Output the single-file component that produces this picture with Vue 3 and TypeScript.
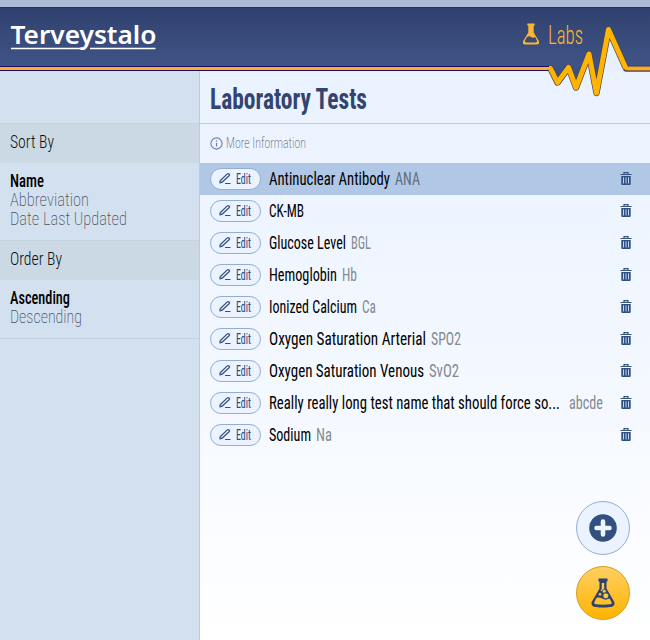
<script setup lang="ts">
import { h, type FunctionalComponent } from 'vue'

interface FitProps { text: string; w: number; box: number; base: number }

// Single line of condensed text, fitted to a given advance width.
const Fit: FunctionalComponent<FitProps> = (p) =>
  h('svg', { width: p.w, height: p.box, class: 'fit' }, [
    h('text', { x: 0, y: p.base, textLength: p.w, lengthAdjust: 'spacingAndGlyphs' }, p.text),
  ])
Fit.props = ['text', 'w', 'box', 'base']

const tests = [
  { name: 'Antinuclear Antibody', w: 121, abbr: 'ANA', aw: 25 },
  { name: 'CK-MB', w: 35, abbr: '', aw: 0 },
  { name: 'Glucose Level', w: 77, abbr: 'BGL', aw: 20 },
  { name: 'Hemoglobin', w: 68, abbr: 'Hb', aw: 15 },
  { name: 'Ionized Calcium', w: 88, abbr: 'Ca', aw: 14 },
  { name: 'Oxygen Saturation Arterial', w: 157, abbr: 'SPO2', aw: 30 },
  { name: 'Oxygen Saturation Venous', w: 155, abbr: 'SvO2', aw: 30 },
  { name: 'Really really long test name that should force so...', w: 291, abbr: 'abcde', aw: 34, long: true },
  { name: 'Sodium', w: 42, abbr: 'Na', aw: 16 },
]

const groups = [
  { title: 'Sort By', w: 44, options: [
    { text: 'Name', w: 34, on: true },
    { text: 'Abbreviation', w: 79, on: false },
    { text: 'Date Last Updated', w: 117, on: false },
  ] },
  { title: 'Order By', w: 52, options: [
    { text: 'Ascending', w: 60, on: true },
    { text: 'Descending', w: 72, on: false },
  ] },
]
</script>

<template>
  <div class="app">
    <header class="header">
      <svg class="brand" width="160" height="40" viewBox="0 0 160 40">
        <text x="10.500" y="27.500" textLength="146" lengthAdjust="spacingAndGlyphs">Terveystalo</text>
        <path d="M11 32.500H80.500M90 32.500H155.500" stroke="#fff" stroke-width="1.300" />
      </svg>
      <div class="labs">
        <svg width="18" height="23" viewBox="0 0 18 23">
          <path d="M5.300.5H12.700V2.500H11.700V9.500L16.800 18Q18 21.500 14.700 21.500H3.300Q0 21.500 1.200 18L6.300 9.500V2.500H5.300Z" fill="#fdb432" />
          <path d="M5 14Q7 12.500 9 14T13.200 14L15 17.800Q15.500 19.400 13.700 19.500H4.300Q2.500 19.400 3 17.800Z" fill="#374a78" />
        </svg>
        <Fit class="labs-text" text="Labs" :w="35" :box="30" :base="24" />
      </div>
    </header>

    <div class="body">
      <aside class="side">
        <div class="side-top" />
        <section v-for="g in groups" :key="g.title" class="group">
          <h2><Fit :text="g.title" :w="g.w" :box="39" :base="24" /></h2>
          <ul>
            <li v-for="o in g.options" :key="o.text" :class="{ on: o.on }">
              <Fit :text="o.text" :w="o.w" :box="19" :base="16" />
            </li>
          </ul>
        </section>
      </aside>

      <main class="main">
        <h1><Fit text="Laboratory Tests" :w="157" :box="52" :base="38" /></h1>
        <div class="info">
          <svg width="13" height="13" viewBox="0 0 13 13" fill="none" stroke="#6d82aa" stroke-width="1.100">
            <circle cx="6.500" cy="6.500" r="5.600" />
            <path d="M6.500 5.700V9.600M6.500 3.200V4.500" />
          </svg>
          <Fit text="More Information" :w="80" :box="39" :base="24" />
        </div>
        <div v-for="(t, i) in tests" :key="t.name" class="row" :class="{ active: i === 0 }">
          <button class="edit">
            <svg width="12" height="12" viewBox="0 0 12 12" fill="none" stroke="#32507f" stroke-width="1.200" stroke-linejoin="round">
              <path d="M1.200 7.700L8.300.900Q9.300.300 10.100 1T10.100 2.700L3.100 9.200L.9 9.800ZM6 10.500H11.500" />
            </svg>
            <Fit text="Edit" :w="15" :box="20" :base="15" />
          </button>
          <Fit class="name" :text="t.name" :w="t.w" :box="32" :base="22" />
          <Fit v-if="t.abbr" class="abbr" :class="{ far: t.long }" :text="t.abbr" :w="t.aw" :box="32" :base="22" />
          <svg class="trash" width="12" height="13" viewBox="0 0 12 13">
            <path d="M4 1.900V.6H8V1.900M.5 2.500H11.500" fill="none" stroke="#34537f" stroke-width="1.200" />
            <path d="M1.300 4H10.700V12Q10.700 13 9.700 13H2.300Q1.300 13 1.300 12Z" fill="#2f5085" />
            <path d="M3.500 5.300V11.500M6 5.300V11.500M8.500 5.300V11.500" stroke="#c4d3e8" stroke-width="1" />
          </svg>
        </div>
      </main>
    </div>

    <svg class="pulse" width="110" height="80" viewBox="540 20 110 80">
      <path d="M549 66L557.500 83L568.500 66ZM568.500 66L576 88L584 66ZM591.500 66L596.500 93L601.500 66Z" fill="#3e5183" />
      <path d="M583 71L589 54L592.500 71ZM600.800 71L608.500 29L627 71Z" fill="#e8f0fd" />
      <g fill="none" stroke-linejoin="round">
        <path d="M549 68.500H550.500L557.500 82.500L568.500 67.500L576 87.500L589 54L596.500 93L608.500 29.500L626 68.500H651" stroke="#4d4350" stroke-width="6.400" />
        <path d="M549 68.500H550.500L557.500 82.500L568.500 67.500L576 87.500L589 54L596.500 93L608.500 29.500L626 68.500" stroke="#ffb400" stroke-width="5" />
        <path d="M628 68.500H651" stroke="#76575f" stroke-width="5" />
        <path d="M625 68.500H651" stroke="#ffb00f" stroke-width="3.400" />
      </g>
    </svg>

    <div class="fabs">
      <button class="fab add">
        <svg width="28" height="28" viewBox="0 0 28 28">
          <circle cx="14" cy="14" r="13.800" fill="#32507f" />
          <path d="M14 7.500V20.500M7.500 14H20.500" stroke="#edf4ff" stroke-width="4.600" stroke-linecap="round" />
        </svg>
      </button>
      <button class="fab lab">
        <svg width="24" height="30" viewBox="0 0 24 30">
          <path d="M7.500 .5H16.500V3.500H15.500V10.500L23.300 24Q24.500 28.300 19 29Q12 30 5 29Q-.5 28.300 .7 24L8.500 10.500V3.500H7.500Z" fill="#2d426f" />
          <path d="M5.500 19.800Q8.500 19 11.500 20.800T18.500 20.500L20.800 24.500Q21 26 19 26.300Q12 27.200 5 26.300Q3 26 3.200 24.500Z" fill="#ffc12f" />
          <path d="M10.800 5H13.200V10.800L14.500 13H9.500L10.800 10.800Z" fill="#ffcb53" />
          <g fill="#ffca4b" stroke="#2d426f" stroke-width=".8">
            <circle cx="9" cy="16.300" r="1.700" />
            <circle cx="13.200" cy="13.200" r="2" />
            <circle cx="14.800" cy="17.800" r="2.900" />
          </g>
        </svg>
      </button>
    </div>
  </div>
</template>

<style>
body { margin: 0; overflow: hidden; }
</style>

<style scoped>
.app {
  position: relative;
  display: flex;
  flex-direction: column;
  width: 650px;
  height: 640px;
  overflow: hidden;
  box-sizing: border-box;
  border-top: 7px solid #acbbd5;
  font-family: Roboto, "Liberation Sans", sans-serif;
  font-stretch: 75%;
}
.app *, .app svg { box-sizing: border-box; }
.fit { display: block; flex: none; overflow: visible; fill: currentColor; }
h1, h2, ul { margin: 0; padding: 0; list-style: none; }
button { padding: 0; font-family: inherit; font-stretch: inherit; }

.header {
  display: flex;
  justify-content: space-between;
  flex: none;
  height: 59px;
  padding: 8px 67px 0 0;
  border-top: 1px solid #243258;
  background: linear-gradient(#30416e, #3f5486);
}
.brand { overflow: visible; fill: #fff; font: 600 25px "Noto Sans", "Open Sans", sans-serif; font-stretch: 100%; }
.labs { display: flex; gap: 8px; padding-top: 7px; }
.labs-text { margin-top: -3px; font-size: 25px; font-weight: 350; color: #fdb432; }

.body {
  display: flex;
  flex: 1;
  margin-top: 5px;
  position: relative;
}
.body::before {
  content: "";
  position: absolute;
  top: -5px;
  left: 0;
  right: 0;
  height: 3px;
  border: solid #1c0b62;
  border-width: 1px 0;
  background: #ffae27;
}
.side {
  width: 200px;
  flex: none;
  border-right: 1px solid #bdcbe1;
  background: #d3e0f0;
}
.side-top { height: 52px; }
.group { border-top: 1px solid #c5d1df; }
.group:last-child { border-bottom: 1px solid #c5d1df; }
.group h2 {
  height: 39px;
  padding-left: 10px;
  background: #cbd9e5;
  font-size: 19px;
  font-weight: 300;
  color: #0c1014;
}
.group ul { padding: 8px 0 12px 10px; font-size: 19px; }
.group li { font-weight: 200; color: #48525c; }
.group li.on { font-weight: 550; color: #000; }

.main {
  flex: 1;
  background: linear-gradient(#eaf2ff, #f5f9ff 60%, #fff);
}
h1 {
  height: 53px;
  padding-left: 10px;
  border-bottom: 1px solid #bccce3;
  font-size: 30px;
  font-weight: 700;
  color: #32446f;
}
.info {
  display: flex;
  align-items: center;
  gap: 3px;
  height: 39px;
  padding-left: 10px;
  font-size: 15px;
  font-weight: 200;
  color: #535b68;
}
.row {
  display: flex;
  align-items: center;
  height: 32px;
  padding: 0 18px 0 10px;
}
.row.active { background: #b0c7e5; }
.edit {
  display: flex;
  align-items: center;
  gap: 5px;
  width: 51px;
  height: 22px;
  margin-right: 8px;
  padding-left: 8px;
  border: 1px solid #94aed0;
  border-radius: 11px;
  background: #eaf3ff;
  color: #2d4977;
  font-size: 14px;
  font-weight: 400;
}
.name { font-size: 19px; font-weight: 430; color: #000; }
.abbr { margin-left: 5px; font-size: 19px; font-weight: 400; color: #858a91; }
.active .abbr { color: #606d7e; }
.abbr.far { margin-left: 9px; }
.trash { margin: 0 0 1px auto; }

.pulse { position: absolute; top: 13px; left: 540px; }
.fabs {
  position: absolute;
  right: 20px;
  bottom: 20px;
  display: flex;
  flex-direction: column;
  gap: 11px;
}
.fab {
  display: flex;
  align-items: center;
  justify-content: center;
  width: 54px;
  height: 54px;
  border: 1px solid #94aed0;
  border-radius: 50%;
}
.add { background: #eaf3ff; }
.lab { border-color: #d69d20; background: linear-gradient(#ffcf63, #ffb400); }
</style>
